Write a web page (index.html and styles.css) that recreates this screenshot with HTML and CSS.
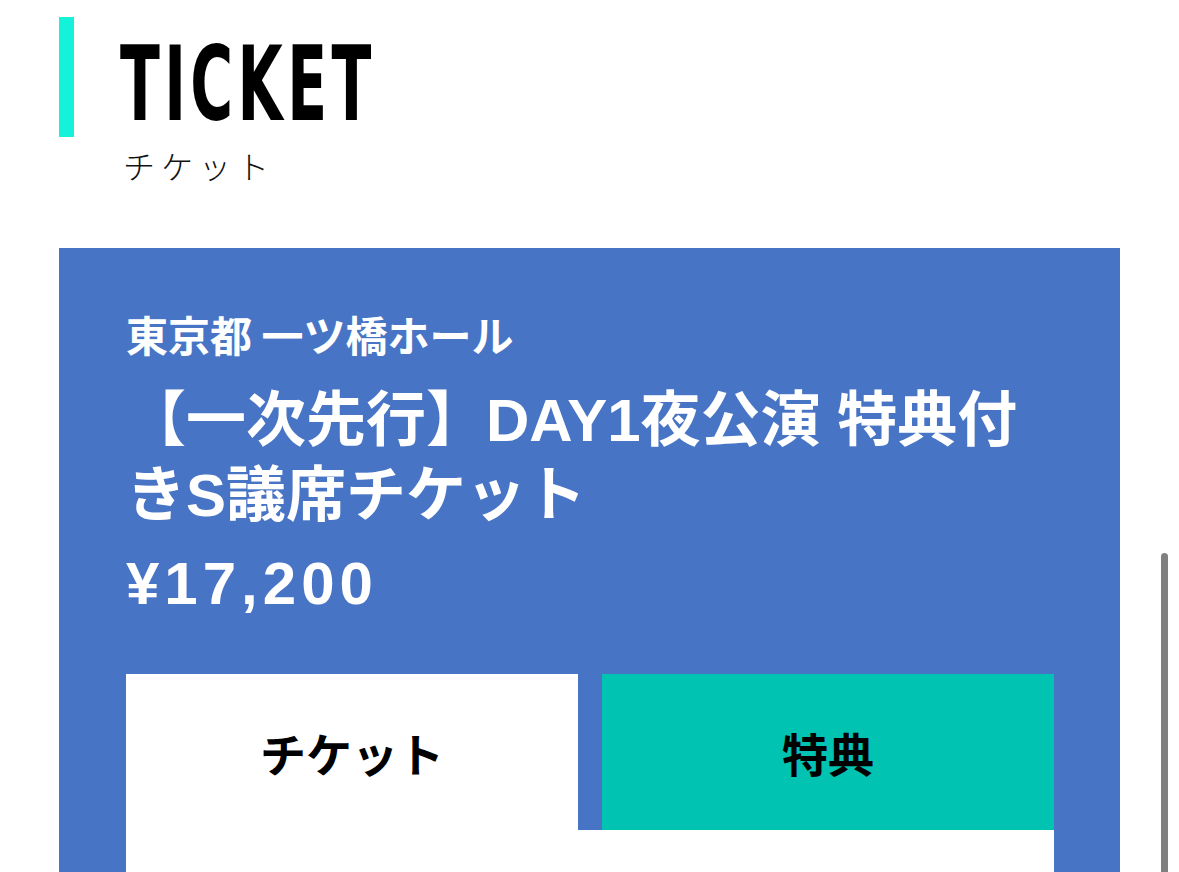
FILE: index.html
```html
<!DOCTYPE html>
<html lang="ja">
<head>
<meta charset="utf-8">
<title>TICKET</title>
<link rel="stylesheet" href="styles.css">
</head>
<body>
<header class="section-head">
  <div class="accent-bar"></div>
  <div class="head-text">
    <h1 class="head-title"><span class="head-title-inner">TICKET</span></h1>
    <p class="head-sub">チケット</p>
  </div>
</header>

<section class="ticket-card">
  <p class="venue">東京都 一ツ橋ホール</p>
  <h2 class="ticket-name">【一次先行】DAY1夜公演 特典付きS議席チケット</h2>
  <p class="price">¥17,200</p>
  <div class="tabs">
    <div class="tab tab-active">チケット</div>
    <div class="tab tab-bonus">特典</div>
  </div>
  <div class="tab-panel"></div>
</section>

<div class="scroll-thumb"></div>
</body>
</html>
```

FILE: styles.css
```css
html, body {
  margin: 0;
  padding: 0;
  height: 100%;
  overflow: hidden;
  background: #ffffff;
}

body {
  position: relative;
  font-family: "Liberation Sans", "Noto Sans CJK JP", sans-serif;
  color: #000;
}

.section-head {
  display: flex;
  align-items: flex-start;
  padding: 17px 0 0 59px;
}

.accent-bar {
  width: 15px;
  height: 120px;
  background: #14f3d9;
  flex: none;
}

.head-text {
  margin-left: 46px;
}

.head-title {
  margin: 0;
  height: 120px;
  line-height: 120px;
  font-family: "DejaVu Sans Condensed", "DejaVu Sans", sans-serif;
  font-weight: 700;
  font-size: 103px;
  white-space: nowrap;
}

.head-title-inner {
  display: inline-block;
  transform: translateY(7px) scaleX(0.63);
  transform-origin: 0 50%;
  letter-spacing: 7px;
}

.head-sub {
  margin: 8px 0 0 3px;
  font-family: "Noto Sans CJK JP", sans-serif;
  font-weight: 300;
  font-size: 32px;
  line-height: 40px;
  letter-spacing: 6px;
  color: #111;
}

.ticket-card {
  margin: 63px 0 0 59px;
  width: 1061px;
  min-height: 700px;
  box-sizing: border-box;
  padding: 58px 66px 0 67px;
  background: #4874c5;
  color: #fff;
}

.venue {
  margin: 0;
  font-family: "Noto Sans CJK JP", sans-serif;
  font-weight: 700;
  font-size: 42px;
  line-height: 56px;
}

.ticket-name {
  margin: 21px 0 0 0;
  font-family: "Liberation Sans", "Noto Sans CJK JP", sans-serif;
  font-weight: 700;
  font-size: 60px;
  line-height: 75px;
}

.price {
  margin: 11px 0 0 0;
  font-family: "Liberation Sans", sans-serif;
  font-weight: 700;
  font-size: 60px;
  line-height: 80px;
  letter-spacing: 5px;
}

.tabs {
  margin-top: 50px;
  display: grid;
  grid-template-columns: 1fr 1fr;
  column-gap: 24px;
  background: #4874c5;
}

.tab {
  height: 156px;
  display: flex;
  align-items: center;
  justify-content: center;
  font-family: "Noto Sans CJK JP", sans-serif;
  font-weight: 700;
  font-size: 46px;
  color: #000;
}

.tab-active {
  background: #ffffff;
}

.tab-bonus {
  background: #00c3b1;
}

.tab-panel {
  height: 300px;
  background: #ffffff;
}

.scroll-thumb {
  position: absolute;
  top: 553px;
  left: 1161px;
  width: 7px;
  height: 400px;
  border-radius: 4px;
  background: #808080;
}
```
